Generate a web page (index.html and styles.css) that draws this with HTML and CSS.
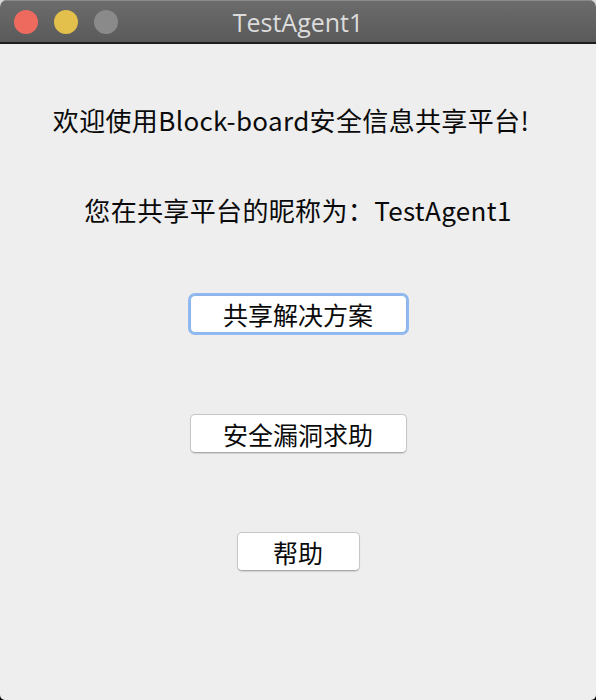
FILE: index.html
```html
<!DOCTYPE html>
<html lang="zh">
<head>
<meta charset="utf-8">
<title>TestAgent1</title>
<link rel="stylesheet" href="styles.css">
</head>
<body>
<div class="window">
  <div class="titlebar">
    <div class="lights">
      <span class="light red"></span>
      <span class="light yellow"></span>
      <span class="light gray"></span>
    </div>
    <div class="title">TestAgent1</div>
  </div>
  <div class="content">
    <p class="welcome">欢迎使用Block-board安全信息共享平台!</p>
    <p class="nick">您在共享平台的昵称为：TestAgent1</p>
    <button class="btn btn-wide focused">共享解决方案</button>
    <button class="btn btn-wide second">安全漏洞求助</button>
    <button class="btn btn-small">帮助</button>
  </div>
</div>
</body>
</html>
```

FILE: styles.css
```css
html, body {
  margin: 0;
  padding: 0;
  width: 596px;
  height: 700px;
  overflow: hidden;
  background: linear-gradient(#d8d8d8 0 50%, #000 50% 100%);
}
.window {
  width: 596px;
  height: 700px;
  border-radius: 7px 7px 5px 5px;
  overflow: hidden;
  background: #eeeeee;
  display: flex;
  flex-direction: column;
  font-family: "Noto Sans CJK SC", "Noto Sans", sans-serif;
}
.titlebar {
  height: 42px;
  flex: none;
  background: linear-gradient(#6c6c6c, #5a5a5a);
  border-bottom: 2px solid #1e1e1e;
  box-shadow: inset 0 1px 0 #8a8a8a;
  display: flex;
  align-items: center;
  position: relative;
}
.lights {
  display: flex;
  gap: 16px;
  padding-left: 14px;
  padding-top: 2px;
}
.light {
  width: 24px;
  height: 24px;
  border-radius: 50%;
  display: block;
}
.red { background: #ee6a5f; }
.yellow { background: #e3c04b; }
.gray { background: #8a8a8a; }
.title {
  position: absolute;
  left: 0;
  right: 0;
  top: 0;
  height: 42px;
  line-height: 44px;
  text-align: center;
  color: #dcdcdc;
  font-family: "Open Sans", "DejaVu Sans", sans-serif;
  font-size: 25px;
}
.content {
  display: flex;
  flex-direction: column;
  align-items: center;
}
.welcome, .nick {
  margin: 0;
  font-size: 26px;
  line-height: 30px;
  color: #0a0a0a;
  white-space: nowrap;
  letter-spacing: 0.35px;
}
.welcome {
  margin-top: 61px;
  margin-left: -14px;
}
.nick {
  margin-top: 60px;
}
.btn {
  font-family: "Noto Sans CJK SC", "Noto Sans", sans-serif;
  font-size: 25px;
  color: #0a0a0a;
  background: #fff;
  border: 1px solid #c6c6c6;
  border-bottom-color: #aaa;
  border-radius: 5px;
  padding: 0;
  height: 39px;
  line-height: 36px;
  box-shadow: 0 1px 1px rgba(0,0,0,0.12);
}
.btn-wide {
  width: 217px;
}
.focused {
  margin-top: 70px;
  border: 1px solid #8bb5ec;
  box-shadow: 0 0 0 2px #8fb9ef;
  height: 38px;
}
.second {
  margin-top: 81px;
}
.btn-small {
  width: 123px;
  margin-top: 79px;
}
```
